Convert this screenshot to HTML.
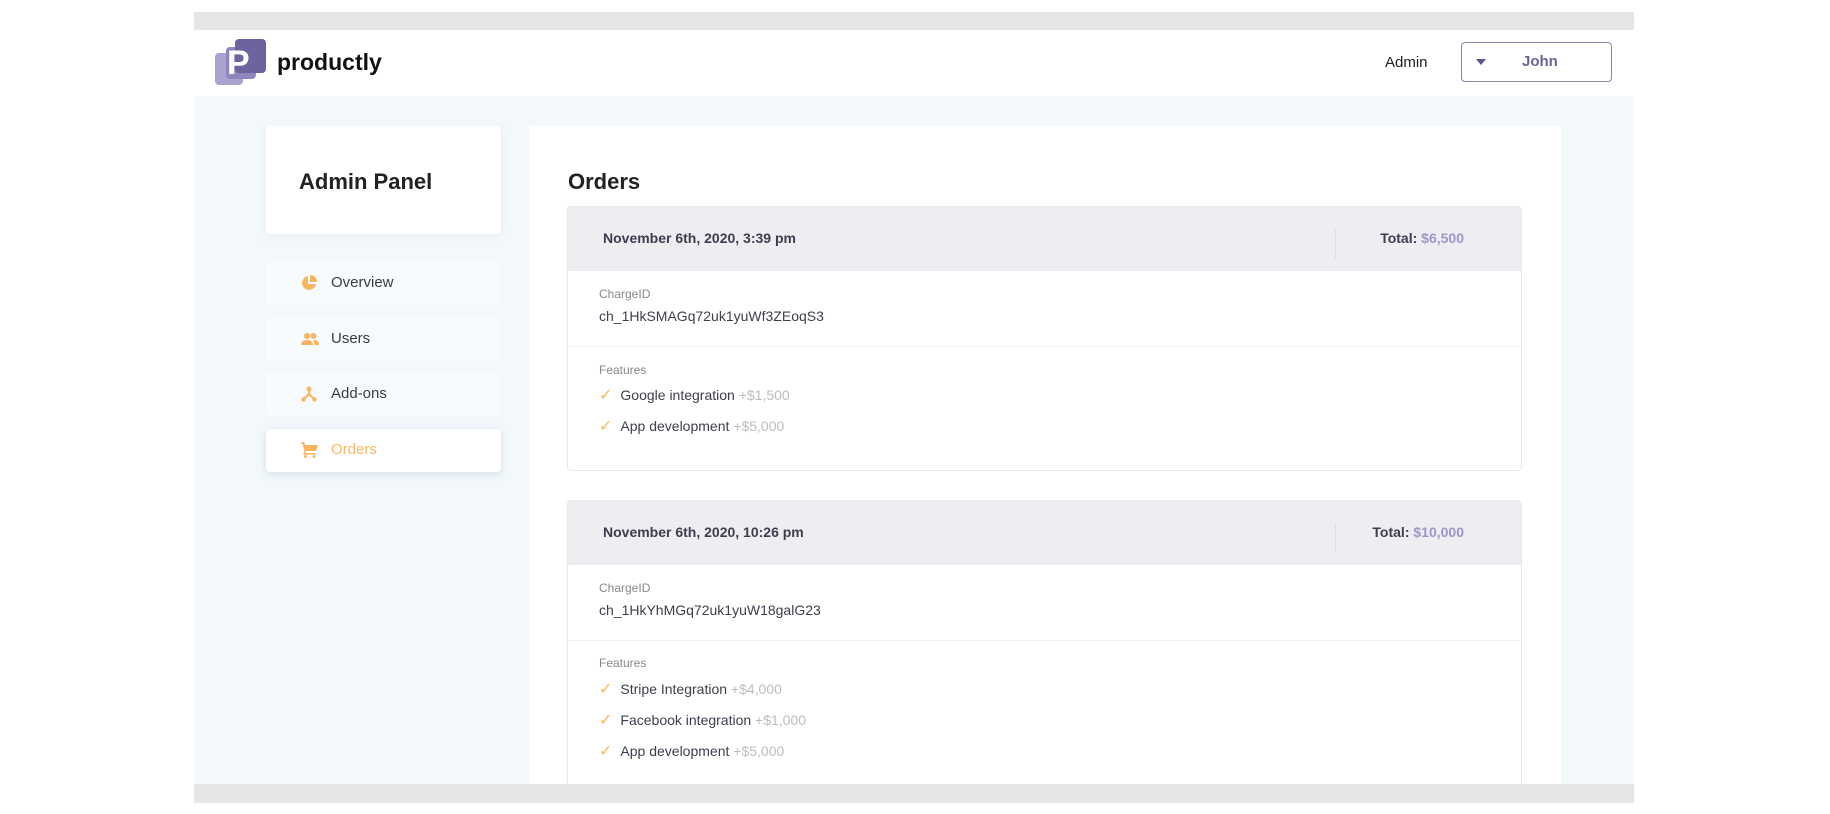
<!DOCTYPE html>
<html><head><meta charset="utf-8"><style>
*{margin:0;padding:0;box-sizing:border-box}
body{width:1830px;height:814px;background:#fff;font-family:"Liberation Sans",Arial,sans-serif;position:relative;overflow:hidden;color:#333}
.a{position:absolute}
.nav{position:absolute;left:266px;width:235px;height:43px;background:#f8fbfd;border-radius:4px;font-size:15px;color:#3a3a44}
.nav span{position:absolute;left:65px;top:12px}
.nav svg{position:absolute;left:35px;top:13px}
.card{position:absolute;left:567px;width:955px;background:#fff;border:1px solid #e6eaee;border-radius:4px}
.hd{height:64px;background:#ededf2;position:relative}
.hd .d{position:absolute;left:35px;top:23px;font-size:14px;font-weight:bold;color:#3d3d4e}
.hd .sep{position:absolute;left:767px;top:22px;width:1px;height:30px;background:#dcdce4}
.hd .t{position:absolute;right:57px;top:23px;font-size:14px;font-weight:bold;color:#3d3d4e}
.hd .t b{color:#9c97c9}
.lbl{position:absolute;left:31px;font-size:12px;color:#888}
.val{position:absolute;left:31px;font-size:14px;color:#3e3e4e}
.ln{position:absolute;left:0;right:0;height:1px;background:#eef0f3}
.it{position:absolute;left:31px;font-size:14px;color:#3e3e4e}
.it i{font-style:normal;color:#f9b85a;margin-right:8px;font-size:16px}
.it em{font-style:normal;color:#bdbdbd}
</style></head><body>
<div class="a" style="left:194px;top:12px;width:1440px;height:18px;background:#e6e6e6"></div>
<div class="a" style="left:194px;top:96px;width:1440px;height:688px;background:#f3f8fb"></div>
<!-- logo -->
<div class="a" style="left:215px;top:53px;width:28px;height:32px;background:#aaa3d2;border-radius:4px"></div>
<div class="a" style="left:226px;top:47px;width:30px;height:32px;background:#8f86c0;border-radius:4px"></div>
<div class="a" style="left:235px;top:39px;width:31px;height:34px;background:#6e639f;border-radius:4px"></div>
<div class="a" style="left:227px;top:43px;font-size:34px;font-weight:bold;color:#fff;line-height:40px">P</div>
<div class="a" style="left:277px;top:49px;font-size:23px;font-weight:bold;color:#111">productly</div>
<div class="a" style="left:1385px;top:54px;font-size:15px;color:#222">Admin</div>
<div class="a" style="left:1461px;top:42px;width:151px;height:40px;border:1.5px solid #8a84b0;border-radius:4px"></div>
<div class="a" style="left:1476px;top:59px;width:0;height:0;border-left:5px solid transparent;border-right:5px solid transparent;border-top:6px solid #5d5390"></div>
<div class="a" style="left:1522px;top:53px;font-size:15px;font-weight:bold;color:#6a6196">John</div>
<!-- sidebar -->
<div class="a" style="left:266px;top:126px;width:235px;height:108px;background:#fff;border-radius:4px;box-shadow:0 2px 8px rgba(150,180,200,.15)"></div>
<div class="a" style="left:299px;top:169px;font-size:22px;font-weight:bold;color:#222">Admin Panel</div>
<div class="nav" style="top:262px"><svg width="16" height="16" viewBox="0 0 16 16"><path d="M7 1A7 7 0 1 0 15 9H7Z" fill="#fab35e"/><path d="M9 0V7H16A7 7 0 0 0 9 0Z" fill="#fab35e"/></svg><span>Overview</span></div>
<div class="nav" style="top:318px"><svg width="18" height="16" viewBox="0 0 18 16"><circle cx="6" cy="5" r="3" fill="#fab35e"/><circle cx="12.5" cy="5" r="3" fill="#fab35e"/><path d="M0 14C0 10 3 9 6 9S12 10 12 14ZM13 9C16 9 18 10 18 14H13.5C13.5 12 13 10 12 9.2Z" fill="#fab35e"/></svg><span>Users</span></div>
<div class="nav" style="top:373px"><svg width="16" height="16" viewBox="0 0 16 16"><circle cx="8" cy="3" r="2.5" fill="#fab35e"/><circle cx="2.5" cy="13.5" r="2.2" fill="#fab35e"/><circle cx="13.5" cy="13.5" r="2.2" fill="#fab35e"/><path d="M8 4V8L3 13M8 8L13 13" stroke="#fab35e" stroke-width="2" fill="none"/></svg><span>Add-ons</span></div>
<div class="nav" style="top:429px;background:#fff;box-shadow:0 2px 8px rgba(120,150,180,.25)"><svg width="17" height="16" viewBox="0 0 17 16"><path d="M0 0H3L4 3H17L15 9H5L4 11H15V12.5H2L3.5 9L1.5 1.5H0Z" fill="#fab35e"/><circle cx="4.5" cy="14.5" r="1.5" fill="#fab35e"/><circle cx="13" cy="14.5" r="1.5" fill="#fab35e"/></svg><span style="color:#fbb964">Orders</span></div>
<!-- main -->
<div class="a" style="left:529px;top:126px;width:1032px;height:658px;background:#fff"></div>
<div class="a" style="left:568px;top:169px;font-size:22px;font-weight:bold;color:#222">Orders</div>
<div class="card" style="top:206px;height:265px">
<div class="hd"><div class="d">November 6th, 2020, 3:39 pm</div><div class="sep"></div><div class="t">Total: <b>$6,500</b></div></div>
<div class="lbl" style="top:80px">ChargeID</div>
<div class="val" style="top:101px">ch_1HkSMAGq72uk1yuWf3ZEoqS3</div>
<div class="ln" style="top:139px"></div>
<div class="lbl" style="top:156px">Features</div>
<div class="it" style="top:178px"><i>✓</i>Google integration <em>+$1,500</em></div>
<div class="it" style="top:209px"><i>✓</i>App development <em>+$5,000</em></div>
</div>
<div class="card" style="top:500px;height:300px">
<div class="hd"><div class="d">November 6th, 2020, 10:26 pm</div><div class="sep"></div><div class="t">Total: <b>$10,000</b></div></div>
<div class="lbl" style="top:80px">ChargeID</div>
<div class="val" style="top:101px">ch_1HkYhMGq72uk1yuW18galG23</div>
<div class="ln" style="top:139px"></div>
<div class="lbl" style="top:155px">Features</div>
<div class="it" style="top:178px"><i>✓</i>Stripe Integration <em>+$4,000</em></div>
<div class="it" style="top:209px"><i>✓</i>Facebook integration <em>+$1,000</em></div>
<div class="it" style="top:240px"><i>✓</i>App development <em>+$5,000</em></div>
</div>
<div class="a" style="left:194px;top:784px;width:1440px;height:19px;background:#e6e6e6"></div>
</body></html>
